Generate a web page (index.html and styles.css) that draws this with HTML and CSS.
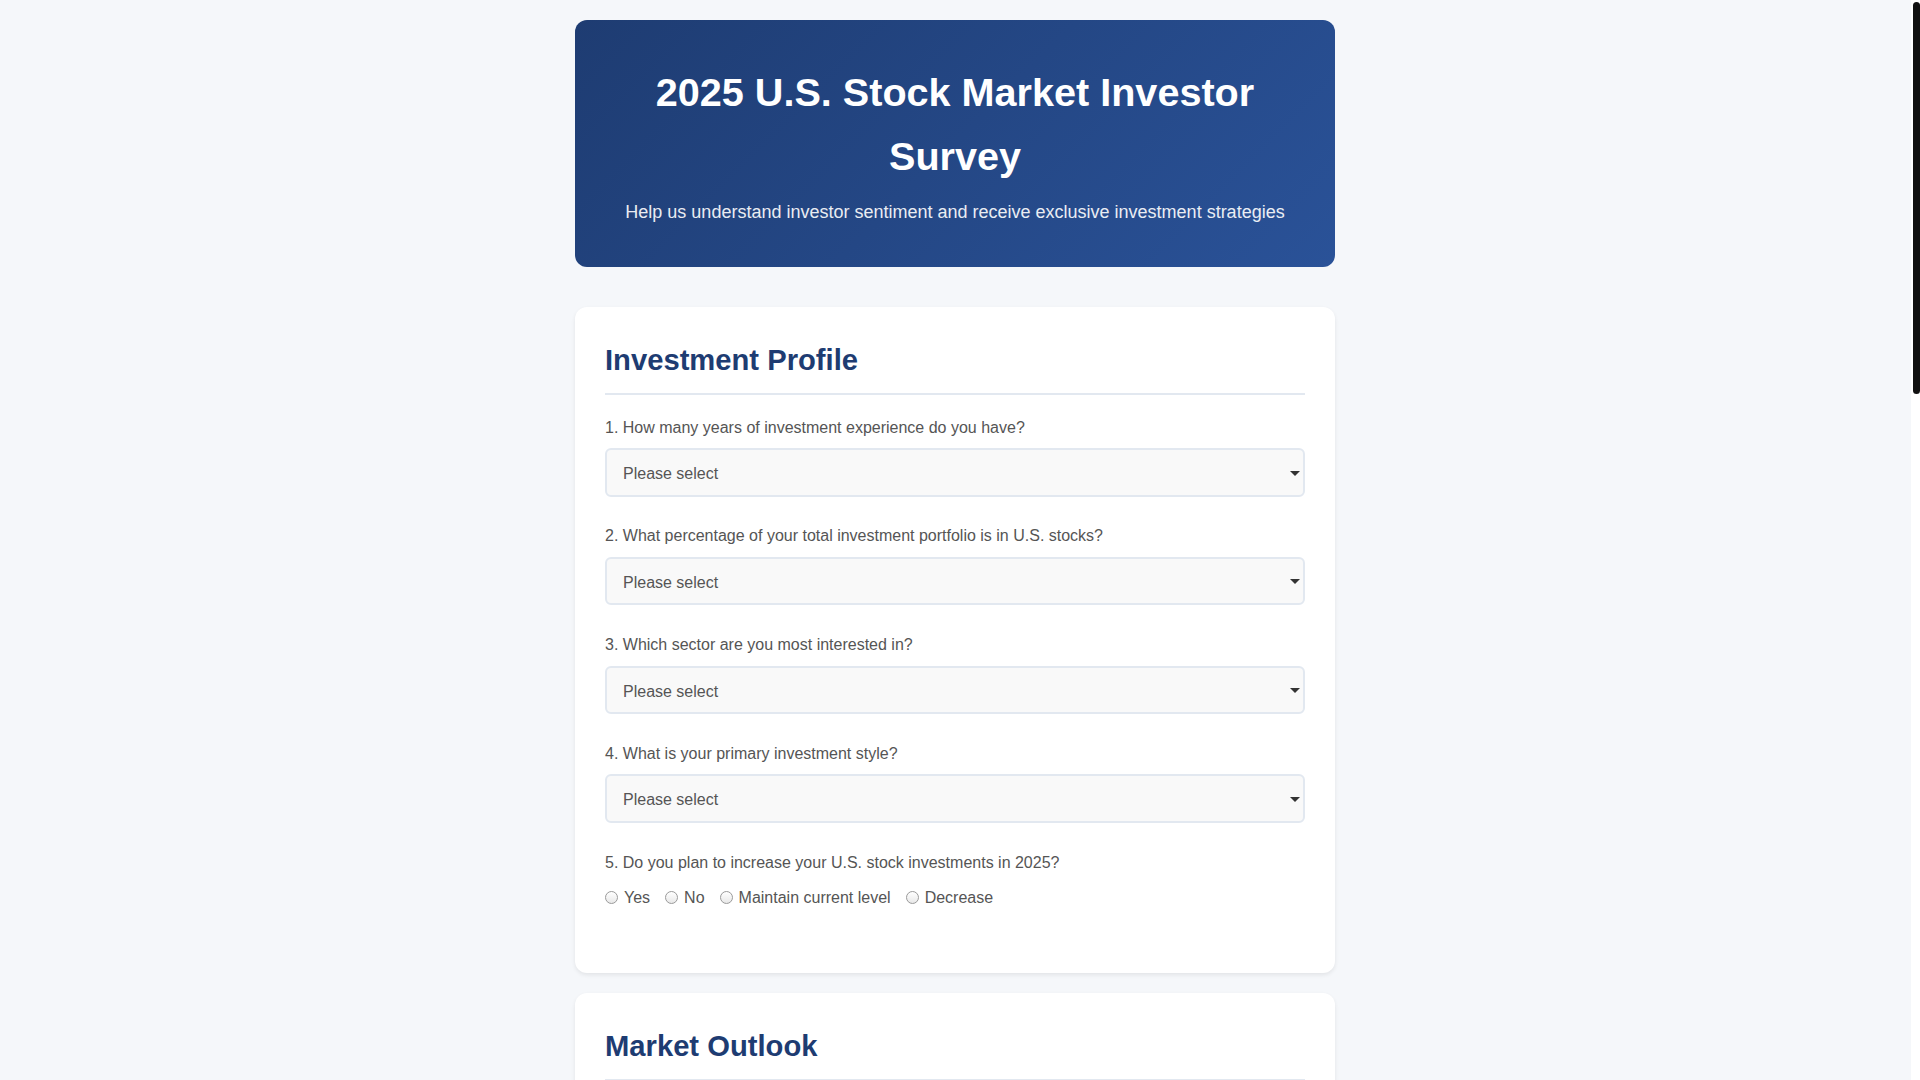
FILE: index.html
```html
<!DOCTYPE html>
<html lang="en">
<head>
<meta charset="utf-8">
<title>2025 U.S. Stock Market Investor Survey</title>
<link rel="stylesheet" href="styles.css">
</head>
<body>
<div class="scroll-track" aria-hidden="true"><div class="scroll-thumb"></div></div>
<div class="container">
  <header class="hero">
    <h1>2025 U.S. Stock Market Investor Survey</h1>
    <p>Help us understand investor sentiment and receive exclusive investment strategies</p>
  </header>

  <form class="survey">
    <section class="card">
      <h2>Investment Profile</h2>
      <div class="question">
        <label class="q-label">1. How many years of investment experience do you have?</label>
        <div class="select-wrap"><select><option>Please select</option><option>Less than 1 year</option><option>1-3 years</option><option>3-5 years</option><option>More than 5 years</option></select></div>
      </div>
      <div class="question">
        <label class="q-label">2. What percentage of your total investment portfolio is in U.S. stocks?</label>
        <div class="select-wrap"><select><option>Please select</option><option>0-25%</option><option>25-50%</option><option>50-75%</option><option>75-100%</option></select></div>
      </div>
      <div class="question">
        <label class="q-label">3. Which sector are you most interested in?</label>
        <div class="select-wrap"><select><option>Please select</option><option>Technology</option><option>Healthcare</option><option>Finance</option><option>Energy</option></select></div>
      </div>
      <div class="question">
        <label class="q-label">4. What is your primary investment style?</label>
        <div class="select-wrap"><select><option>Please select</option><option>Value</option><option>Growth</option><option>Income</option><option>Index</option></select></div>
      </div>
      <div class="question">
        <label class="q-label">5. Do you plan to increase your U.S. stock investments in 2025?</label>
        <div class="radio-group">
          <label class="opt"><input type="radio" name="q5">Yes</label>
          <label class="opt"><input type="radio" name="q5">No</label>
          <label class="opt"><input type="radio" name="q5">Maintain current level</label>
          <label class="opt"><input type="radio" name="q5">Decrease</label>
        </div>
      </div>
    </section>

    <section class="card">
      <h2>Market Outlook</h2>
      <div class="question">
        <label class="q-label">6. How do you expect the S&amp;P 500 to perform in 2025?</label>
        <div class="select-wrap"><select><option>Please select</option></select></div>
      </div>
      <div class="question">
        <label class="q-label">7. What do you see as the biggest risk to the market this year?</label>
        <div class="select-wrap"><select><option>Please select</option></select></div>
      </div>
      <div class="question">
        <label class="q-label">8. Do you expect the Federal Reserve to cut interest rates in 2025?</label>
        <div class="radio-group">
          <label class="opt"><input type="radio" name="q8">Yes</label>
          <label class="opt"><input type="radio" name="q8">No</label>
          <label class="opt"><input type="radio" name="q8">Not sure</label>
        </div>
      </div>
      <div class="question">
        <label class="q-label">9. Which investment themes are you following most closely?</label>
        <div class="select-wrap"><select><option>Please select</option></select></div>
      </div>
      <div class="question">
        <label class="q-label">10. Where do you expect inflation to be by the end of 2025?</label>
        <div class="select-wrap"><select><option>Please select</option></select></div>
      </div>
      <div class="question">
        <label class="q-label">11. How would you rate your confidence in the U.S. economy?</label>
        <div class="select-wrap"><select><option>Please select</option></select></div>
      </div>
      <div class="question">
        <label class="q-label">12. Please share any other thoughts on the 2025 market:</label>
        <textarea rows="4" placeholder="Your thoughts..."></textarea>
      </div>
    </section>

    <section class="card">
      <h2>Receive Your Exclusive Strategy</h2>
      <div class="question">
        <label class="q-label">Full Name</label>
        <input type="text" placeholder="Enter your name">
      </div>
      <div class="question">
        <label class="q-label">Email Address</label>
        <input type="email" placeholder="Enter your email">
      </div>
      <div class="question">
        <label class="q-label">Phone Number (optional)</label>
        <input type="tel" placeholder="Enter your phone number">
      </div>
      <div class="question">
        <label class="q-label">Approximate portfolio size</label>
        <div class="select-wrap"><select><option>Please select</option></select></div>
      </div>
      <div class="question">
        <label class="opt"><input type="checkbox">I agree to receive investment insights and updates by email</label>
      </div>
    </section>

    <button type="button" class="submit">Submit Survey &amp; Get Strategy</button>
  </form>

  <footer class="foot">
    <p>Your information is kept strictly confidential and will only be used for research purposes.</p>
    <p>&copy; 2025 Investor Insights Research. All rights reserved.</p>
  </footer>
</div>
</body>
</html>
```

FILE: styles.css
```css
* { box-sizing: border-box; }

body {
  margin: 0;
  padding-right: 10px;
  background: #f5f7fa;
  font-family: "Liberation Sans", Arial, sans-serif;
  line-height: 1.6;
  color: #333;
}

.scroll-track {
  position: fixed;
  top: 0;
  right: 0;
  bottom: 0;
  width: 9px;
  background: #ffffff;
  z-index: 10;
}

.scroll-thumb {
  margin: 2px 0 0 2px;
  width: 7px;
  height: 392px;
  border-radius: 4px;
  background: #111111;
}

.container {
  max-width: 800px;
  margin: 0 auto;
  padding: 20px;
}

.hero {
  background: linear-gradient(135deg, #1e3c72 0%, #2a5298 100%);
  color: #fff;
  text-align: center;
  padding: 40px;
  border-radius: 12px;
  margin-bottom: 40px;
}

.hero h1 {
  font-size: 39.6px;
  margin: 0 0 10px;
  line-height: 64px;
}

.hero p {
  margin: 0;
  font-size: 18px;
  opacity: 0.9;
}

.card {
  background: #fff;
  border-radius: 12px;
  padding: 30px;
  margin-bottom: 20px;
  box-shadow: 0 2px 4px rgba(0, 0, 0, 0.08);
}

.card h2 {
  font-size: 29.2px;
  line-height: 46px;
  color: #1e3c72;
  margin: 0 0 20px;
  padding-bottom: 10px;
  border-bottom: 2px solid #e2e8f0;
}

.question {
  margin-bottom: 26.7px;
}

.q-label {
  display: block;
  margin-bottom: 8px;
  color: #555555;
  font-size: 16px;
}

.select-wrap {
  position: relative;
}

.select-wrap::after {
  content: "";
  position: absolute;
  right: 5px;
  top: 50%;
  margin-top: -2px;
  border-left: 5px solid transparent;
  border-right: 5px solid transparent;
  border-top: 5px solid #333333;
  pointer-events: none;
}

select,
input[type="text"],
input[type="email"],
input[type="tel"],
textarea {
  display: block;
  width: 100%;
  padding: 15px 12px 11px;
  border: 2px solid #e2e8f0;
  border-radius: 6px;
  font-size: 16px;
  line-height: 18.4px;
  font-family: inherit;
  background: #f9f9f9;
  color: #555555;
}

select {
  -webkit-appearance: none;
  appearance: none;
  padding-left: 16px;
}

textarea { resize: vertical; }

.radio-group {
  display: flex;
  flex-wrap: wrap;
  padding-top: 2px;
}

.opt {
  display: inline-flex;
  align-items: center;
  margin-right: 15px;
  margin-bottom: 6px;
  color: #555555;
  font-size: 16px;
}

.opt input {
  -webkit-appearance: none;
  appearance: none;
  width: 13px;
  height: 13px;
  margin: 0 6px 0 0;
  border: 1px solid #9a9a9a;
  border-radius: 50%;
  background: linear-gradient(#ffffff, #e8e8e8);
}

.opt input[type="checkbox"] {
  border-radius: 2px;
}

.submit {
  display: block;
  width: 100%;
  padding: 16px;
  border: none;
  border-radius: 8px;
  background: linear-gradient(135deg, #1e3c72 0%, #2a5298 100%);
  color: #fff;
  font-size: 18px;
  font-weight: bold;
  font-family: inherit;
  margin-top: 20px;
}

.foot {
  text-align: center;
  color: #718096;
  font-size: 14px;
  padding: 30px 0 40px;
}

.foot p { margin: 0 0 6px; }
```
